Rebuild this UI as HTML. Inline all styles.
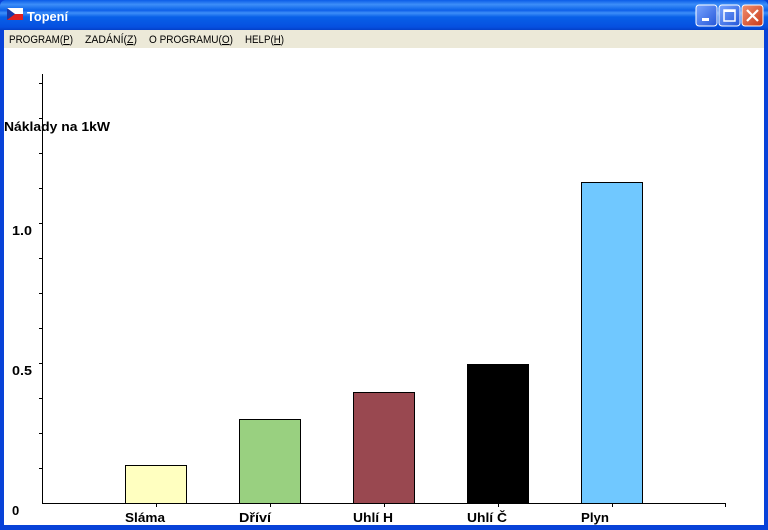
<!DOCTYPE html>
<html><head><meta charset="utf-8"><style>
html,body{margin:0;padding:0;width:768px;height:530px;overflow:hidden;background:#0842d8}
svg{display:block}
</style></head><body>
<svg width="768" height="530" xmlns="http://www.w3.org/2000/svg" font-family="Liberation Sans, sans-serif">
<defs>
<linearGradient id="tb" x1="0" y1="0" x2="0" y2="1">
<stop offset="0" stop-color="#0a5ce8"/><stop offset="0.15" stop-color="#3d8ef8"/><stop offset="0.35" stop-color="#0860e8"/><stop offset="0.85" stop-color="#0650e0"/><stop offset="1" stop-color="#0440c8"/>
</linearGradient>
<linearGradient id="bb" x1="0" y1="0" x2="1" y2="1"><stop offset="0" stop-color="#7aa6ff"/><stop offset="1" stop-color="#2456d8"/></linearGradient>
<linearGradient id="rb" x1="0" y1="0" x2="1" y2="1"><stop offset="0" stop-color="#f09070"/><stop offset="1" stop-color="#c83818"/></linearGradient>
</defs>
<rect x="0" y="0" width="768" height="530" fill="#0842d8"/>
<rect x="0" y="0" width="768" height="30" fill="url(#tb)" rx="6"/>
<rect x="0" y="10" width="768" height="20" fill="url(#tb)"/>
<rect x="7" y="8" width="16" height="6" fill="#fff"/>
<rect x="7" y="14" width="16" height="6" fill="#e02020"/>
<polygon points="7,8 15,14 7,20" fill="#1838a8"/>
<text x="27" y="21" font-size="13" font-weight="bold" fill="#fff" textLength="41" lengthAdjust="spacingAndGlyphs">Topení</text>
<rect x="696" y="5" width="21" height="21" rx="3" fill="url(#bb)" stroke="#fff"/>
<rect x="702" y="18" width="7" height="3" fill="#fff"/>
<rect x="719" y="5" width="21" height="21" rx="3" fill="url(#bb)" stroke="#fff"/>
<rect x="724" y="10" width="11" height="11" fill="none" stroke="#fff" stroke-width="1.5"/>
<line x1="724" y1="11" x2="735" y2="11" stroke="#fff" stroke-width="2"/>
<rect x="742" y="5" width="21" height="21" rx="3" fill="url(#rb)" stroke="#fff"/>
<path d="M747 10 L758 21 M758 10 L747 21" stroke="#fff" stroke-width="2.2"/>
<rect x="4" y="30" width="760" height="18" fill="#ece9d8"/>
<g font-size="11" fill="#000">
<text x="9" y="43" textLength="64" lengthAdjust="spacingAndGlyphs">PROGRAM(<tspan text-decoration="underline">P</tspan>)</text>
<text x="85" y="43" textLength="52" lengthAdjust="spacingAndGlyphs">ZADÁNÍ(<tspan text-decoration="underline">Z</tspan>)</text>
<text x="149" y="43" textLength="84" lengthAdjust="spacingAndGlyphs">O PROGRAMU(<tspan text-decoration="underline">O</tspan>)</text>
<text x="245" y="43" textLength="39" lengthAdjust="spacingAndGlyphs">HELP(<tspan text-decoration="underline">H</tspan>)</text>
</g>
<rect x="4" y="48" width="760" height="477" fill="#fff"/>
<g stroke="#000" stroke-width="1" shape-rendering="crispEdges">
<line x1="42.5" y1="74" x2="42.5" y2="504"/>
<line x1="42" y1="503.5" x2="726" y2="503.5"/>
<path d="M39 83.5h3M39 118.5h3M39 153.5h3M39 188.5h3M39 223.5h3M39 258.5h3M39 293.5h3M39 328.5h3M39 363.5h3M39 398.5h3M39 433.5h3M39 468.5h3"/>
<path d="M156.5 504v3M270.5 504v3M384.5 504v3M498.5 504v3M612.5 504v3M725.5 504v3"/>
<rect x="125.5" y="465.5" width="61" height="38" fill="#ffffc0"/>
<rect x="239.5" y="419.5" width="61" height="84" fill="#99d080"/>
<rect x="353.5" y="392.5" width="61" height="111" fill="#994850"/>
<rect x="467.5" y="364.5" width="61" height="139" fill="#000"/>
<rect x="581.5" y="182.5" width="61" height="321" fill="#70c8ff"/>
</g>
<g font-size="13" font-weight="bold" fill="#000" lengthAdjust="spacingAndGlyphs">
<text x="4" y="131" textLength="106" lengthAdjust="spacingAndGlyphs">Náklady na 1kW</text>
<text x="12" y="235" textLength="20" lengthAdjust="spacingAndGlyphs">1.0</text>
<text x="12" y="375" textLength="20" lengthAdjust="spacingAndGlyphs">0.5</text>
<text x="12" y="515">0</text>
<text x="125" y="522" textLength="40" lengthAdjust="spacingAndGlyphs">Sláma</text>
<text x="239" y="522" textLength="32" lengthAdjust="spacingAndGlyphs">Dříví</text>
<text x="353" y="522" textLength="40" lengthAdjust="spacingAndGlyphs">Uhlí H</text>
<text x="467" y="522" textLength="40" lengthAdjust="spacingAndGlyphs">Uhlí Č</text>
<text x="581" y="522" textLength="28" lengthAdjust="spacingAndGlyphs">Plyn</text>
</g>
</svg>
</body></html>
